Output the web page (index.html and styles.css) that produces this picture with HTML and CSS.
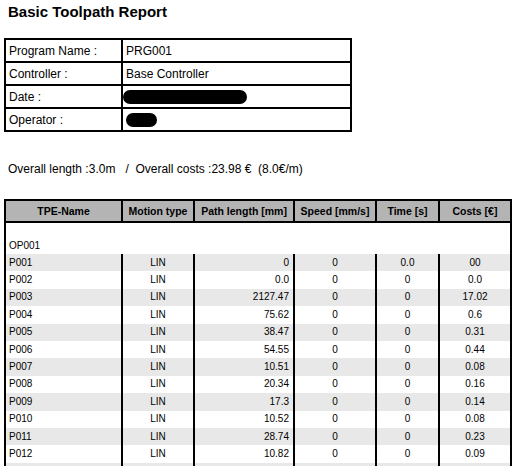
FILE: index.html
```html
<!DOCTYPE html>
<html>
<head>
<meta charset="utf-8">
<link rel="stylesheet" href="styles.css">
</head>
<body>
<h1 class="title">Basic Toolpath Report</h1>
<table class="info">
  <tr><td class="label">Program Name :</td><td>PRG001</td></tr>
  <tr><td class="label">Controller :</td><td>Base Controller</td></tr>
  <tr><td class="label">Date :</td><td><span class="redact redact-date"></span></td></tr>
  <tr><td class="label">Operator :</td><td><span class="redact redact-op"></span></td></tr>
</table>
<p class="summary">Overall length :3.0m   /  Overall costs :23.98 €  (8.0€/m)</p>
<table class="data">
  <colgroup>
    <col class="c1"><col class="c2"><col class="c3"><col class="c4"><col class="c5"><col class="c6">
  </colgroup>
  <thead>
    <tr><th>TPE-Name</th><th>Motion type</th><th>Path length [mm]</th><th>Speed [mm/s]</th><th>Time [s]</th><th>Costs [€]</th></tr>
  </thead>
  <tbody>
    <tr class="group"><td colspan="6">OP001</td></tr>
    <tr class="odd"><td class="name">P001</td><td>LIN</td><td class="num">0</td><td>0</td><td>0.0</td><td>00</td></tr>
    <tr><td class="name">P002</td><td>LIN</td><td class="num">0.0</td><td>0</td><td>0</td><td>0.0</td></tr>
    <tr class="odd"><td class="name">P003</td><td>LIN</td><td class="num">2127.47</td><td>0</td><td>0</td><td>17.02</td></tr>
    <tr><td class="name">P004</td><td>LIN</td><td class="num">75.62</td><td>0</td><td>0</td><td>0.6</td></tr>
    <tr class="odd"><td class="name">P005</td><td>LIN</td><td class="num">38.47</td><td>0</td><td>0</td><td>0.31</td></tr>
    <tr><td class="name">P006</td><td>LIN</td><td class="num">54.55</td><td>0</td><td>0</td><td>0.44</td></tr>
    <tr class="odd"><td class="name">P007</td><td>LIN</td><td class="num">10.51</td><td>0</td><td>0</td><td>0.08</td></tr>
    <tr><td class="name">P008</td><td>LIN</td><td class="num">20.34</td><td>0</td><td>0</td><td>0.16</td></tr>
    <tr class="odd"><td class="name">P009</td><td>LIN</td><td class="num">17.3</td><td>0</td><td>0</td><td>0.14</td></tr>
    <tr><td class="name">P010</td><td>LIN</td><td class="num">10.52</td><td>0</td><td>0</td><td>0.08</td></tr>
    <tr class="odd"><td class="name">P011</td><td>LIN</td><td class="num">28.74</td><td>0</td><td>0</td><td>0.23</td></tr>
    <tr><td class="name">P012</td><td>LIN</td><td class="num">10.82</td><td>0</td><td>0</td><td>0.09</td></tr>
    <tr class="odd"><td class="name"></td><td></td><td class="num"></td><td></td><td></td><td></td></tr>
  </tbody>
</table>
</body>
</html>
```
FILE: styles.css
```css
html, body {
  margin: 0;
  padding: 0;
  background: #fff;
}
body {
  padding-left: 4px;
  font-family: "Liberation Sans", Arial, sans-serif;
  color: #000;
  overflow: hidden;
}
.title {
  margin: 3px 0 0 4px;
  font-size: 15px;
  line-height: 18px;
  font-weight: bold;
}
.info {
  margin-top: 17px;
  border-collapse: collapse;
  width: 348px;
  font-size: 12px;
}
.info td {
  border: 2px solid #000;
  height: 21px;
  padding: 0 3px;
  line-height: 14px;
  vertical-align: middle;
}
.info td.label {
  width: 109px;
}
.redact {
  display: inline-block;
  vertical-align: middle;
  background: #000;
  height: 14px;
  border-radius: 7px;
}
.redact-date {
  width: 124px;
  margin-left: -3px;
}
.redact-op {
  width: 31px;
}
.summary {
  margin: 30px 0 0 4px;
  font-size: 12px;
  line-height: 14px;
  white-space: pre;
}
.data {
  margin-top: 23px;
  border-collapse: collapse;
  width: 506px;
  table-layout: fixed;
  font-size: 10px;
}
.c1 { width: 117px; }
.c2 { width: 72px; }
.c3 { width: 100px; }
.c4 { width: 82px; }
.c5 { width: 63px; }
.c6 { width: 72px; }
.data th {
  background: #b4b4b4;
  border: 2px solid #000;
  height: 20px;
  font-size: 10.5px;
  font-weight: bold;
  text-align: center;
  padding: 0;
  line-height: 12px;
}
.data td {
  border-left: 2px solid #000;
  border-right: 2px solid #000;
  height: 17.4px;
  padding: 0 4px;
  text-align: center;
  line-height: 12px;
  white-space: nowrap;
}
.data td.name {
  text-align: left;
  padding-left: 3px;
}
.data td.num {
  text-align: right;
}
.data tr.odd td {
  background: #e8e8e8;
}
.data tr.group td {
  height: 17px;
  padding: 14px 3px 0;
  text-align: left;
}
```
